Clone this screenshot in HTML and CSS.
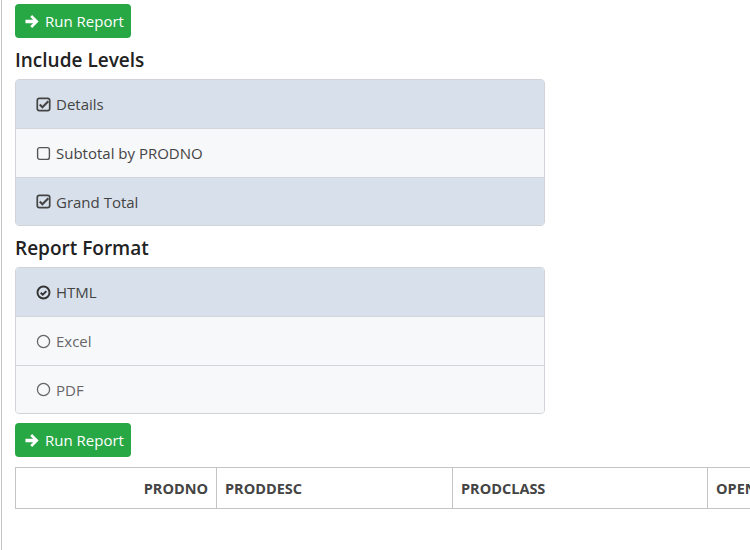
FILE: index.html
```html
<!DOCTYPE html>
<html lang="en">
<head>
  <meta charset="UTF-8">
  <meta name="viewport" content="width=device-width, initial-scale=1.0">
  <title>Report</title>
  <link rel="stylesheet" href="styles.css">
</head>
<body>
  <div class="page">
    <button class="btn-run" type="button">
      <svg class="arrow" viewBox="0 0 16 16"><path d="M0.5 6.2h8.2L5.6 3.1 7.6 1.1 14.5 8l-6.9 6.9-2-2 3.1-3.1H0.5z" fill="#fff"/></svg>
      Run Report
    </button>

    <h3>Include Levels</h3>
    <div class="list-group">
      <div class="list-item active">
        <svg class="ico" viewBox="0 0 14 14"><rect x="1.2" y="1.2" width="11.6" height="11.6" rx="2" fill="none" stroke="#444" stroke-width="1.6"/><path d="M3.5 7l2.5 2.5 5.5-5.5" fill="none" stroke="#444" stroke-width="2"/></svg>
        Details
      </div>
      <div class="list-item">
        <svg class="ico" viewBox="0 0 14 14"><rect x="1.5" y="1.5" width="11" height="11" rx="2" fill="none" stroke="#555" stroke-width="1.3"/></svg>
        Subtotal by PRODNO
      </div>
      <div class="list-item active">
        <svg class="ico" viewBox="0 0 14 14"><rect x="1.2" y="1.2" width="11.6" height="11.6" rx="2" fill="none" stroke="#444" stroke-width="1.6"/><path d="M3.5 7l2.5 2.5 5.5-5.5" fill="none" stroke="#444" stroke-width="2"/></svg>
        Grand Total
      </div>
    </div>

    <h3>Report Format</h3>
    <div class="list-group">
      <div class="list-item active">
        <svg class="ico" viewBox="0 0 14 14"><circle cx="7" cy="7" r="5.6" fill="none" stroke="#333" stroke-width="1.8"/><path d="M4.4 7.2l1.9 1.9 3.4-3.4" fill="none" stroke="#333" stroke-width="1.8"/></svg>
        HTML
      </div>
      <div class="list-item muted">
        <svg class="ico" viewBox="0 0 14 14"><circle cx="7" cy="7" r="5.7" fill="none" stroke="#666" stroke-width="1.2"/></svg>
        Excel
      </div>
      <div class="list-item muted">
        <svg class="ico" viewBox="0 0 14 14"><circle cx="7" cy="7" r="5.7" fill="none" stroke="#666" stroke-width="1.2"/></svg>
        PDF
      </div>
    </div>

    <button class="btn-run btn-bottom" type="button">
      <svg class="arrow" viewBox="0 0 16 16"><path d="M0.5 6.2h8.2L5.6 3.1 7.6 1.1 14.5 8l-6.9 6.9-2-2 3.1-3.1H0.5z" fill="#fff"/></svg>
      Run Report
    </button>

    <div class="table-wrap">
      <table class="report">
        <thead>
          <tr>
            <th class="num">PRODNO</th>
            <th class="desc">PRODDESC</th>
            <th class="cls">PRODCLASS</th>
            <th>OPENDATE</th>
          </tr>
        </thead>
      </table>
    </div>
  </div>
</body>
</html>
```
FILE: styles.css
```css
body {
  margin: 0 0 0 1px;
  font-family: "Open Sans", "Noto Sans", Arial, sans-serif;
  color: #444;
  background: white;
  overflow: hidden;
}
.page {
  border-left: 1px solid #c4c4c4;
  min-height: 550px;
  padding: 4px 0 0 13px;
  box-sizing: border-box;
}
.btn-run {
  display: flex;
  align-items: center;
  gap: 5px;
  height: 34px;
  padding: 0 7px 0 10px;
  background-color: #28a745;
  color: white;
  border: none;
  border-radius: 4px;
  font-family: inherit;
  font-size: 15px;
  cursor: pointer;
}
.arrow {
  width: 15px;
  height: 15px;
}
h3 {
  margin: 9px 0 5px;
  font-size: 19px;
  font-weight: 600;
  color: #222;
  line-height: 27px;
}
.list-group {
  width: 530px;
  box-sizing: border-box;
  border: 1px solid #d0d4d8;
  border-radius: 4px;
  overflow: hidden;
}
.list-item {
  display: flex;
  align-items: center;
  gap: 5px;
  height: 48px;
  padding-left: 20px;
  background: #f7f8fa;
  font-size: 15px;
  color: #444;
  border-top: 1px solid #d2d6da;
}
.list-item:first-child {
  border-top: none;
}
.list-item:last-child {
  height: 47px;
}
.list-item.active {
  background: #d8e1eb;
}
.list-item.muted {
  color: #666;
}
.ico {
  width: 15px;
  height: 15px;
}
.btn-bottom {
  margin-top: 9px;
}
.table-wrap {
  margin-top: 10px;
  width: 735px;
  overflow: hidden;
}
.report {
  border-collapse: collapse;
  width: 800px;
}
.report th {
  height: 40px;
  border: 1px solid #c4c4c4;
  text-align: left;
  padding: 0 8px;
  font-size: 14.5px;
  font-weight: 700;
  color: #444;
}
.report th.num {
  width: 184px;
  text-align: right;
}
.report th.desc {
  width: 219px;
}
.report th.cls {
  width: 238px;
}
```
